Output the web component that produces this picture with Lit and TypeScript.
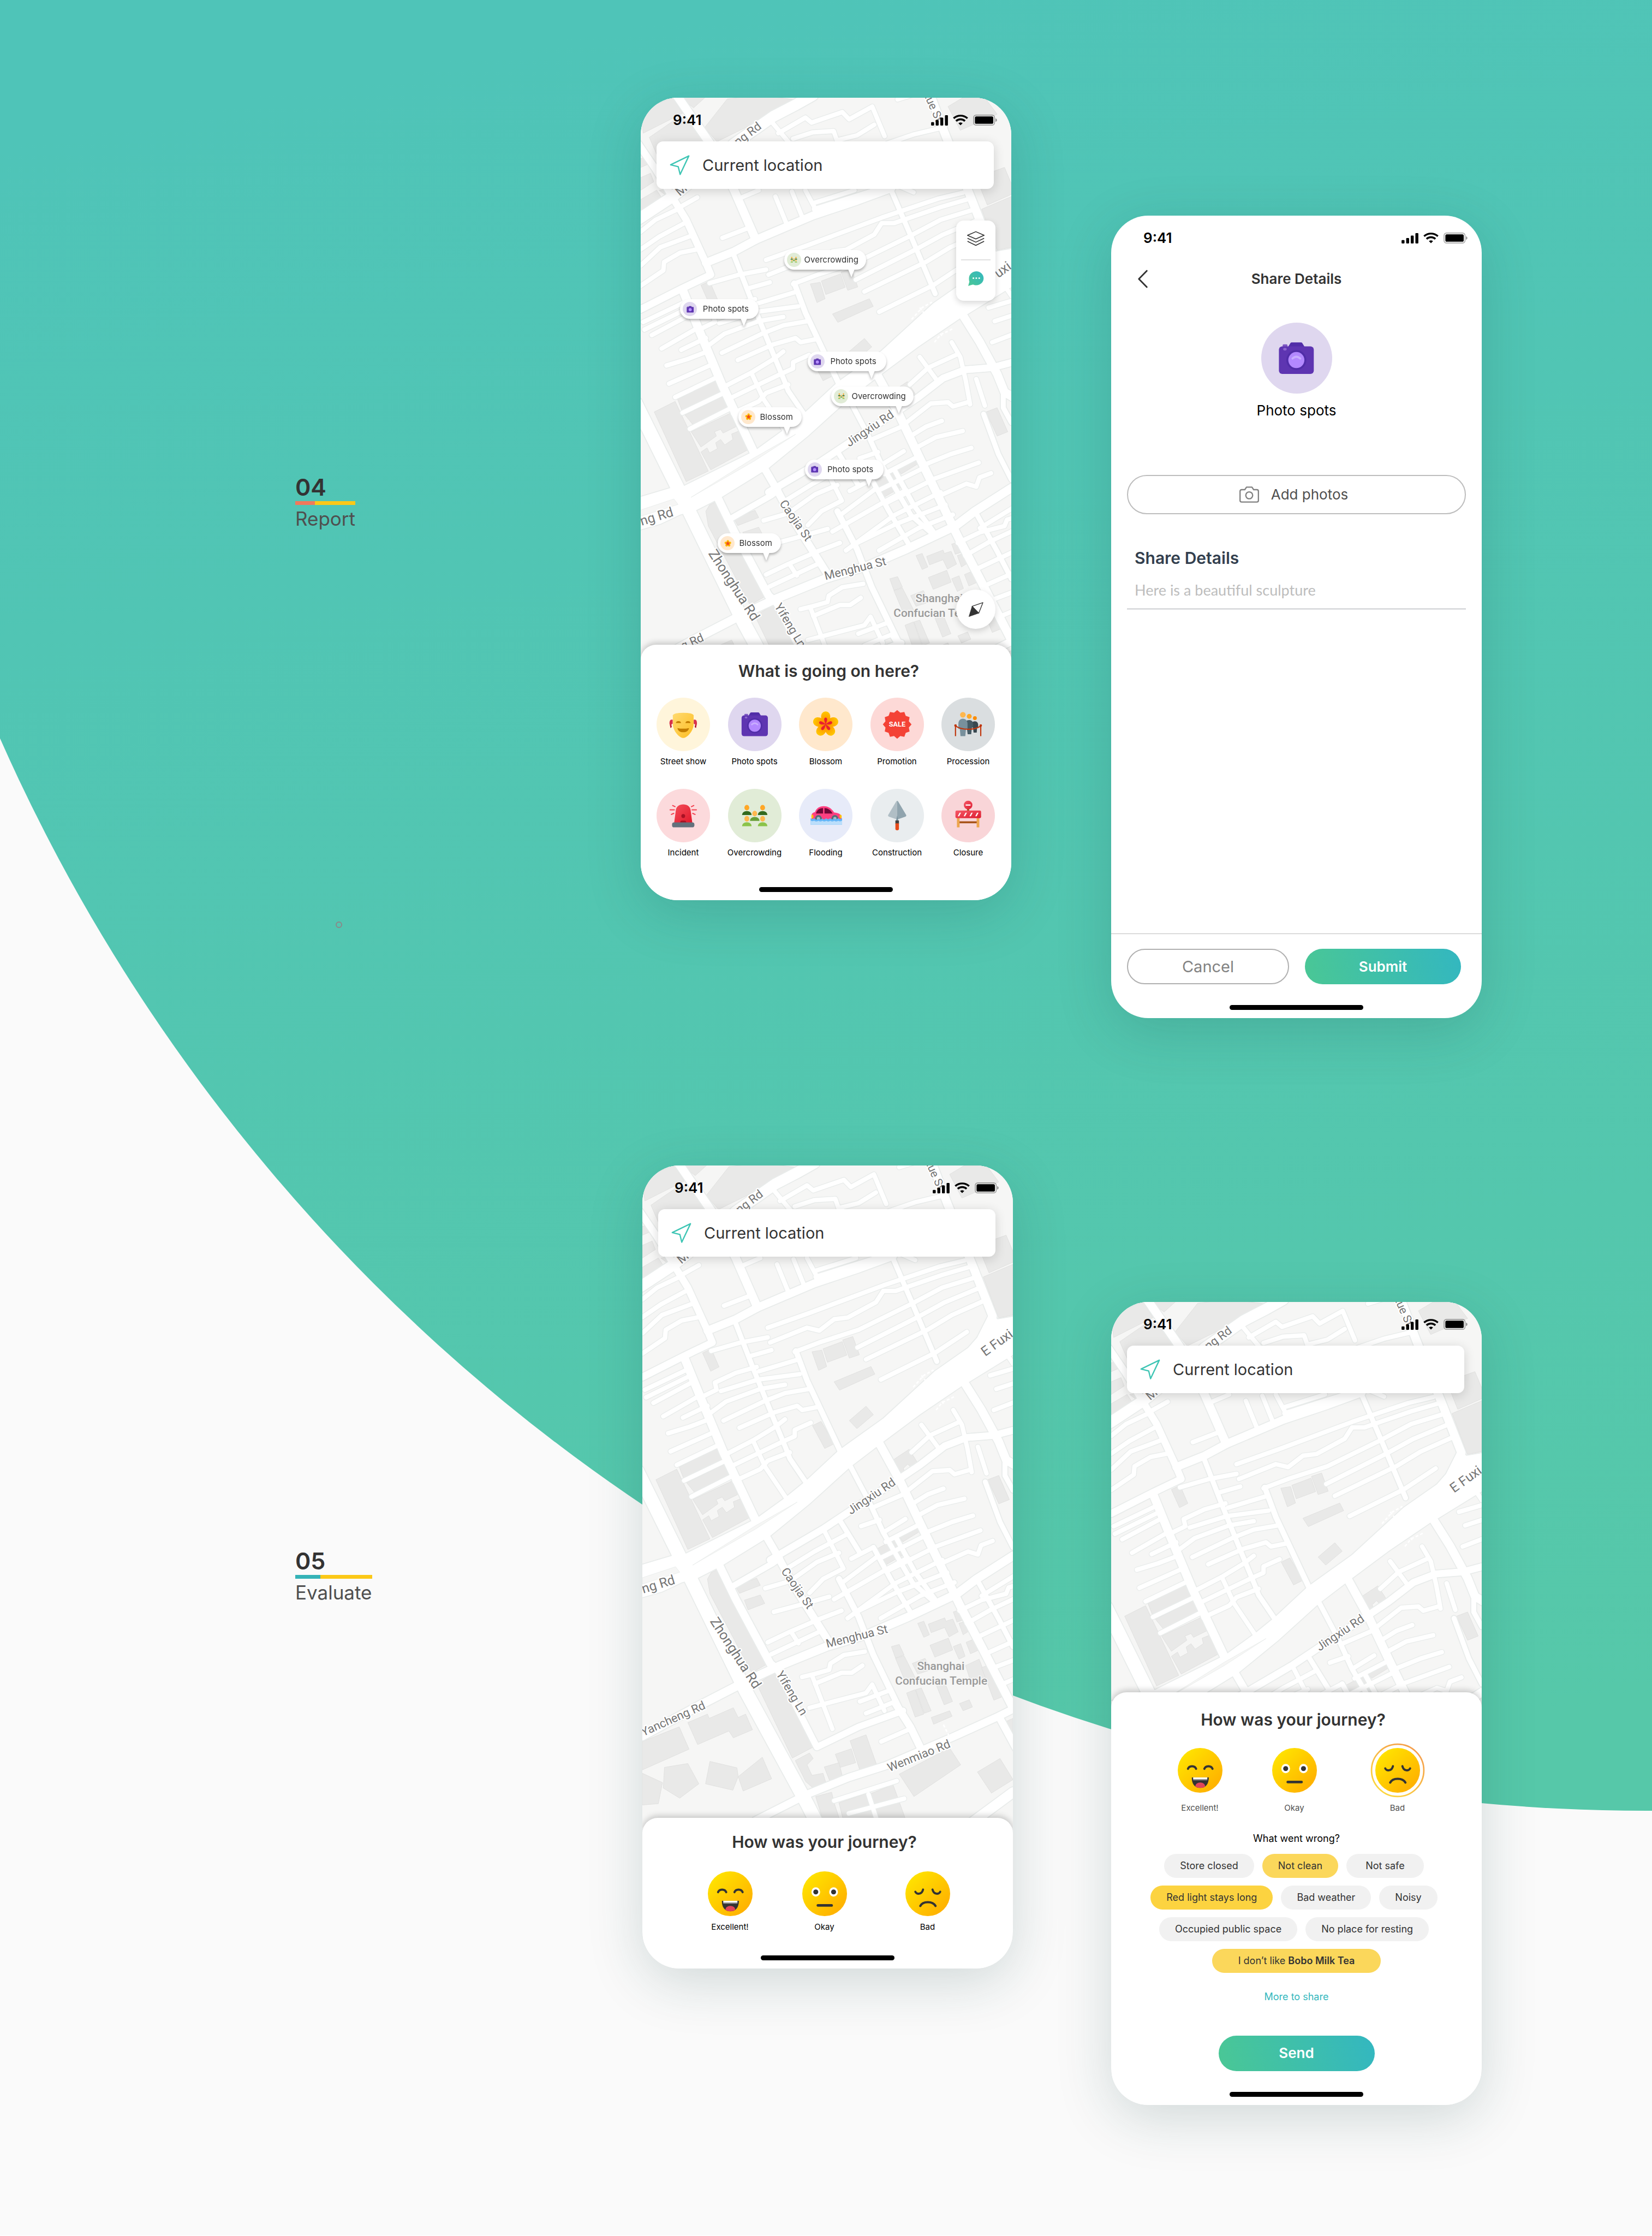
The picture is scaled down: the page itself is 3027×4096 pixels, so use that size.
import { LitElement, html, svg, css, nothing, type TemplateResult, type SVGTemplateResult } from "lit";
import { customElement, property } from "lit/decorators.js";
import { classMap } from "lit/directives/class-map.js";

/* ------------------------------------------------------------------ */
/* City map                                                            */
/* ------------------------------------------------------------------ */

// Street data is kept on a square tile grid and projected onto the 750-wide portrait map.
const project = (points: string): string =>
  points
    .trim()
    .split(/\s+/)
    .map((pair) => {
      const [x, y] = pair.split(",").map(Number);
      return `${((x - 20) * 0.4975).toFixed(1)},${((y - 21) * 0.8546).toFixed(1)}`;
    })
    .join(" ");

const BUILDINGS = [
  "75,765 160,740 295,905 205,930",
  "170,735 325,690 350,720 190,765",
  "200,772 355,728 376,756 235,797",
  "225,812 385,768 408,800 355,815 345,806 320,812 328,822 265,848",
  "265,860 290,850 300,862 332,852 325,838 345,830 362,843 395,830 390,817 420,810 455,855 305,902",
  "265,465 300,455 332,498 298,508",
  "710,462 750,458 770,497 737,506",
  "755,455 833,438 852,470 773,487",
  "835,434 876,426 903,469 862,477",
  "800,533 950,497 966,515 822,553",
  "862,625 930,591 960,611 893,644",
  "712,637 747,627 800,680 762,691",
  "1035,720 1105,693 1140,725 1115,738 1100,728 1082,738 1088,748 1065,755",
  "1407,285 1528,255 1528,375 1470,382",
  "1385,210 1500,186 1528,225 1528,250 1430,275",
  "1270,42 1330,21 1420,21 1470,60 1320,98",
  "970,930 1050,905 1090,940 1000,970",
  "1065,900 1140,875 1150,887 1080,912",
  "1425,765 1470,755 1513,812 1470,822",
  "285,1000 300,985 325,978 532,1200 465,1222 295,1035",
  "485,1248 560,1222 715,1398 630,1424",
  "400,1018 485,998 500,1015 415,1034",
  "435,1050 500,1038 518,1058 450,1073",
  "1140,1105 1165,1100 1188,1132 1165,1138",
  "1183,1107 1250,1092 1255,1100 1283,1095 1305,1125 1268,1137 1250,1115 1195,1127",
  "1285,1078 1318,1072 1335,1095 1300,1102",
  "1308,1105 1335,1100 1352,1122 1325,1132",
  "1190,1157 1265,1140 1283,1168 1210,1185",
  "1285,1160 1315,1153 1333,1183 1308,1190",
  "1337,1150 1370,1142 1390,1168 1355,1177",
  "1033,1160 1065,1155 1085,1180 1050,1187",
  "1050,1188 1085,1182 1140,1245 1095,1250",
  "1095,1270 1130,1262 1165,1320 1130,1327",
  "1132,1262 1155,1258 1195,1312 1167,1318",
  "1118,1200 1170,1188 1195,1215 1140,1225",
  "1215,1250 1250,1245 1282,1290 1248,1298",
  "1310,1295 1350,1286 1363,1303 1325,1312",
  "1195,1328 1270,1312 1280,1325 1205,1344",
  "1335,1205 1390,1190 1420,1235 1360,1250",
  "1400,1210 1435,1202 1488,1278 1450,1287",
  "805,1415 870,1402 888,1435 825,1446",
  "865,1383 930,1369 972,1438 905,1453",
  "760,1445 820,1435 835,1470 785,1482",
  "642,1430 700,1412 715,1425 690,1440 710,1465 755,1460 768,1485 715,1495 685,1480",
  "20,1385 170,1350 210,1403 20,1452",
  "205,1340 285,1320 292,1330 390,1305 410,1328 440,1320 468,1357 390,1376 372,1360 245,1392",
  "110,1446 205,1437 250,1485 172,1519 105,1495",
  "295,1432 405,1447 410,1468 388,1500 277,1485",
  "410,1468 508,1422 546,1473 430,1502",
  "20,1460 102,1482 85,1532 20,1535",
  "1065,1462 1270,1400 1315,1440 1125,1515",
  "1383,1457 1475,1425 1528,1475 1440,1507",
  "1490,1340 1528,1330 1528,1378",
  "725,1515 790,1505 800,1530 840,1600 770,1600",
  "820,1530 930,1508 980,1600 850,1600",
  "950,1508 1040,1487 1110,1600 990,1600",
  "20,50 150,21 190,58 30,105",
  "170,15 292,15 235,45",
  "280,92 372,24 500,15 640,25 540,65 330,125",
  "55,115 180,65 250,100 300,130 100,175",
  "20,165 40,163 52,178 20,186",
  "20,210 60,200 73,220 20,240",
  "20,262 85,240 110,262 20,295",
  "95,240 140,236 158,243 125,253",
];

const ROADS: Array<[number, string]> = [
  [22, "0,312 20,305 150,255 330,170 400,130 560,65 650,38 720,15"],
  [17, "160,10 300,128 400,240 488,357"],
  [14, "20,522 190,472 305,440 285,412 205,310 150,258"],
  [14, "10,130 80,190 150,258"],
  [16, "285,412 400,385 490,357 720,300 900,265 1040,235"],
  [17, "190,475 260,575 350,700 480,860"],
  [10, "395,388 470,500 550,615 605,692 620,715 690,775"],
  [11, "645,460 690,530 825,697"],
  [17, "1195,10 1260,110 1365,260 1445,378 1400,430"],
  [10, "1035,235 1120,350 1218,485"],
  [17, "985,680 1070,770 1150,868 1260,1000 1310,1060 1400,1160 1528,1305"],
  [10, "868,735 945,820 1000,890 1120,1010 1200,1050"],
  [10, "820,858 905,938"],
  [10, "1055,905 1130,985 1210,1048"],
  [10, "960,925 1030,1000 1115,1083"],
  [14, "540,955 760,880 850,845 1060,765 1150,730 1250,685 1340,665 1450,660 1528,648"],
  [15, "525,900 570,945 640,1020 775,1145"],
  [12, "385,1018 550,963 580,950"],
  [16, "335,970 400,1048 540,1200 570,1215"],
  [13, "570,1215 730,1398 900,1350 1080,1312"],
  [17, "20,1372 250,1300 450,1240 580,1205 770,1160 940,1130 1100,1090 1300,1035 1380,1000 1528,945"],
  [12, "820,1000 900,1090 960,1180 1060,1300"],
  [15, "1050,1295 1110,1350 1162,1412"],
  [15, "480,1572 690,1510 860,1470 1010,1442 1280,1375 1470,1325 1528,1308"],
  [17, "1335,540 1400,600 1470,675 1500,718 1540,732"],
  [10, "1495,725 1495,755 1528,790"],
  [10, "1415,770 1475,865 1528,925"],
  [10, "1380,1000 1470,1095 1528,1160"],
  [15, "1470,1325 1540,1400"],
  [20, "1330,1590 1528,1505"],
  [15, "665,1510 730,1590"],
  [27, "0,745 190,968 440,1265 690,1532 740,1590"],
];

const ALLEYS = [
  "250,257 180,280", "178,283 80,310 20,338", "198,318 95,350 20,380", "225,348 100,375 20,418",
  "250,380 180,388 115,410 112,430 20,466", "455,330 352,353", "568,255 615,322", "635,243 680,308",
  "690,240 740,295", "500,240 420,260", "548,75 620,125", "580,105 690,68 715,80 840,55 868,72 962,42 1012,112",
  "640,118 720,103 805,100 818,122 900,110 970,85", "1065,25 1120,15", "1020,130 1130,108 1245,92",
  "725,270 890,240", "725,285 1050,225 1130,245", "530,405 700,370 1000,305 1230,260 1330,246",
  "540,440 690,405 740,412 800,385 855,381 970,345 1000,318 1050,318 1240,280 1370,258",
  "640,462 740,440 900,410 1110,350 1240,310 1380,285", "895,452 1140,380 1250,345 1395,310",
  "930,480 1180,410 1280,375 1415,340", "990,528 1210,465 1340,415", "300,460 420,440 530,428",
  "460,472 545,458", "495,508 645,482", "265,568 322,552 315,535 400,512 485,498", "340,555 490,528 660,515",
  "290,610 360,580 500,550 600,540", "350,625 520,578 600,560 700,550", "415,642 560,605 650,590 670,600 740,592",
  "30,552 200,505", "35,570 210,520", "65,583 220,535", "105,615 240,570", "185,618 285,590",
  "125,655 210,640 300,620", "135,698 320,650", "160,730 340,680", "190,767 365,718", "220,805 390,755",
  "360,705 470,672 560,640 600,622", "375,735 500,700 590,675 640,662 640,647 705,630",
  "395,768 500,740 530,720 620,700", "470,672 520,735 605,808", "1115,700 1190,660 1310,628",
  "1155,635 1225,690", "1285,600 1320,635 1342,690 1360,747", "1385,687 1420,750", "1435,518 1540,500",
  "1460,550 1540,535", "1450,600 1540,580", "1505,470 1528,490", "960,830 1080,800",
  "1090,795 1200,745 1270,742 1290,752 1350,742", "1110,825 1180,800 1245,786", "1140,850 1220,825 1330,810",
  "1165,892 1280,865 1365,850", "1195,927 1300,905 1395,885", "1230,965 1345,935 1385,942 1398,920 1445,910",
  "910,875 985,860", "1000,890 1090,858", "1010,912 1150,870", "870,952 960,925", "990,950 1180,895",
  "1020,980 1210,925", "600,978 720,935 850,895", "520,1022 620,1005 730,960 820,938", "700,1033 755,1000 838,975 755,880",
  "555,1078 670,1060 780,1042", "830,1010 980,945", "800,1048 1020,975 1100,950", "855,1093 1050,1010 1240,955",
  "890,1078 1060,1030 1260,985", "990,1093 1150,1040 1290,1008", "530,1150 620,1125 740,1095 830,1075",
  "545,1178 740,1125", "625,1125 655,1152", "670,1232 720,1225 780,1215 785,1200 840,1180 925,1172",
  "722,1248 830,1222 872,1222 915,1205", "710,1228 793,1355", "700,1305 930,1270 955,1250 1005,1312",
  "905,1290 1020,1265", "930,1318 1050,1290", "992,1385 1110,1355",
  "1310,1075 1400,1050 1500,1035 1510,1020 1540,1015", "1340,1105 1440,1072 1540,1045", "1375,1140 1540,1095",
  "1425,1175 1540,1145", "1440,1212 1540,1190", "1480,1250 1540,1235", "1400,1040 1540,990",
  "800,1525 1055,1478", "860,1555 1085,1520", "940,1510 990,1600",
];

const TRAILS = ["1122,546 1165,518 1205,505", "1155,518 1178,535", "1215,600 1240,582 1290,568", "1228,570 1245,585", "1245,1345 1268,1372"];

const AVENUE =
  "20,966 148,944 190,942 484,857 600,808 685,768 820,695 1000,620 1210,508 1345,453 1425,400 1445,375 1465,385 1540,378 " +
  "1540,465 1350,533 1320,543 1150,610 1000,675 865,735 700,822 540,898 345,968 245,998 180,1008 100,1030 10,1045";
const MEDIANS = ["20,997 155,971 172,984 20,1012", "225,967 480,882 650,818 480,874"];

interface MapLabel { text: string; x: number; y: number; turn: number; size: number }
const LABELS: MapLabel[] = [
  { text: "Mi", x: 79, y: 200, turn: -40, size: 25 },
  { text: "ng Rd", x: 197, y: 98, turn: -37, size: 24 },
  { text: "Xue St", x: 571, y: -10, turn: 66, size: 23 },
  { text: "E Fuxi", x: 694, y: 387, turn: -36, size: 27 },
  { text: "Jingxiu Rd", x: 422, y: 707, turn: -34, size: 24 },
  { text: "ng Rd", x: 2, y: 866, turn: -17, size: 27 },
  { text: "Caojia St", x: 280, y: 821, turn: 55, size: 24 },
  { text: "Menghua St", x: 374, y: 976, turn: -14, size: 24 },
  { text: "Zhonghua Rd", x: 136, y: 922, turn: 57, size: 28 },
  { text: "Yifeng Ln", x: 270, y: 1029, turn: 59, size: 24 },
  { text: "Yancheng Rd", x: 2, y: 1155, turn: -24, size: 24 },
  { text: "Wenmiao Rd", x: 500, y: 1227, turn: -22, size: 24 },
];
const PLACES = [
  { text: "Shanghai", x: 604, y: 1021 },
  { text: "Confucian Temple", x: 605, y: 1050 },
];

@customElement("city-map")
export class CityMap extends LitElement {
  /** Lowest map unit that stays uncovered; labels anchored below it are skipped. */
  @property({ type: Number }) depth = 1340;

  static styles = css`
    :host { display: block; }
    .map { display: block; width: 100%; height: auto; background: #f6f6f5; }
    .building { fill: #e9e9e8; stroke: #dfdfde; stroke-width: 1; }
    .casing { fill: none; stroke: #e9eceb; stroke-linejoin: round; stroke-linecap: round; }
    .road { fill: none; stroke: #ffffff; stroke-linejoin: round; stroke-linecap: round; }
    .avenue { fill: #ffffff; }
    .avenue-edge { fill: none; stroke: #e9eceb; stroke-width: 4; }
    .median { fill: #f6f6f5; stroke: #e9eceb; stroke-width: 1; }
    .trail { fill: none; stroke: #ffffff; stroke-width: 3; stroke-dasharray: 6 4; }
    .label { fill: #757575; stroke: #ffffff; stroke-width: 5; stroke-linejoin: round; paint-order: stroke; font-family: Roboto, "Liberation Sans", sans-serif; }
    .place { fill: #999999; stroke: #f6f6f5; stroke-width: 4; stroke-linejoin: round; paint-order: stroke; text-anchor: middle; font: 500 23px Roboto, "Liberation Sans", sans-serif; }
  `;

  render() {
    return html`
      <svg class="map" viewBox="0 0 750 1340" role="img" aria-label="Street map">
        ${BUILDINGS.map((b) => svg`<polygon class="building" points=${project(b)} />`)}
        ${ALLEYS.map((a) => svg`<polyline class="casing" stroke-width="12" points=${project(a)} />`)}
        ${ROADS.map(([w, r]) => svg`<polyline class="casing" stroke-width=${w + 4} points=${project(r)} />`)}
        <polygon class="avenue-edge" points=${project(AVENUE)} />
        ${ALLEYS.map((a) => svg`<polyline class="road" stroke-width="9" points=${project(a)} />`)}
        ${ROADS.map(([w, r]) => svg`<polyline class="road" stroke-width=${w} points=${project(r)} />`)}
        <polygon class="avenue" points=${project(AVENUE)} />
        ${MEDIANS.map((m) => svg`<polygon class="median" points=${project(m)} />`)}
        ${TRAILS.map((t) => svg`<polyline class="trail" points=${project(t)} />`)}
        ${LABELS.filter((l) => l.y < this.depth).map(
          (l) => svg`<text class="label" font-size=${l.size} transform="translate(${l.x} ${l.y}) rotate(${l.turn})">${l.text}</text>`
        )}
        ${PLACES.filter((p) => p.y < this.depth).map((p) => svg`<text class="place" x=${p.x} y=${p.y}>${p.text}</text>`)}
      </svg>
    `;
  }
}

/* ------------------------------------------------------------------ */
/* Topic icons                                                         */
/* ------------------------------------------------------------------ */

type Topic =
  | "show" | "photo" | "blossom" | "promotion" | "procession"
  | "incident" | "crowd" | "flood" | "construction" | "closure";

const burst = Array.from({ length: 24 }, (_, i) => {
  const r = i % 2 ? 18.4 : 21.8;
  const a = (i * Math.PI) / 12;
  return `${(24 + r * Math.sin(a)).toFixed(2)},${(24 - r * Math.cos(a)).toFixed(2)}`;
}).join(" ");

const person = (x: number, y: number, head: string, body: string) => svg`
  <ellipse cx=${x} cy=${y} rx="3.7" ry="4.2" fill=${head} />
  <path fill=${body} d="M${x - 7.2} ${y + 11.2}c0-3.6 3-6 7.2-6s7.2 2.4 7.2 6z" />`;

const TOPIC_ART: Record<Topic, SVGTemplateResult> = {
  show: svg`
    <defs><linearGradient id="mask" x1="0" y1="0" x2="1" y2="1"><stop offset="0" stop-color="#ffda70"/><stop offset="1" stop-color="#fdbd22"/></linearGradient></defs>
    <path d="M8 17c-4-1-5 2-4.900 6l1.500 6.500 1.900-1.500-.5-4 2-1z" fill="#d8314c"/><path d="M4.500 24l.2 5.500 1.800-1.500z" fill="#a5122b"/>
    <path d="M40 17c4-1 5 2 4.900 6l-1.500 6.500-1.900-1.500.5-4-2-1z" fill="#d8314c"/><path d="M43.500 24l-.2 5.500-1.800-1.500z" fill="#a5122b"/>
    <path d="M8.200 10.200Q10 6.500 24 6.500T39.800 10.200V24c0 9-9.500 20.700-15.800 20.700S8.200 33 8.200 24z" fill="url(#mask)"/>
    <path d="M12.800 22a4 3.400 0 0 1 7.900 0zM27.300 22a4 3.400 0 0 1 7.900 0z" fill="#c27c00"/>
    <path d="M15.200 29.600q8.800 2 17.600 0c-.6 4-4 6.400-8.800 6.400s-8.200-2.400-8.800-6.400z" fill="#c27c00"/>`,
  photo: svg`
    <rect x="8.300" y="8" width="5.500" height="5" rx="1" fill="#7e57c2"/>
    <path d="M14.500 11l2.600-4.300q.6-.9 1.600-.9h10.600q1 0 1.600.9l2.600 4.300z" fill="#512da8"/>
    <rect x="4" y="10.300" width="40" height="31.700" rx="3.800" fill="#5e35b1"/>
    <ellipse cx="10.900" cy="13.600" rx="2" ry="1.500" fill="#8e66cf"/>
    <circle cx="24" cy="26" r="11.500" fill="#512da8"/><circle cx="24" cy="26" r="9.200" fill="#b388ff"/>
    <path d="M19.600 24.200q4.400-4 8.800 0" fill="none" stroke="#c9adff" stroke-width="2.400" stroke-linecap="round"/>`,
  blossom: svg`
    <defs><radialGradient id="petal" gradientUnits="userSpaceOnUse" cx="24" cy="24" r="20"><stop offset=".2" stop-color="#ff8f00"/><stop offset="1" stop-color="#ffca00"/></radialGradient></defs>
    ${[0, 72, 144, 216, 288].map((a) => svg`<path transform="rotate(${a} 24 24)" fill="url(#petal)" d="M24 26c-3.500-3-7-8-7-13.500C17 7.500 20 4.300 24 4.300s7 3.200 7 8.200C31 18 27.500 23 24 26z"/>`)}
    ${[0, 72, 144, 216, 288].map((a) => svg`<path transform="rotate(${a} 24 24)" fill="#e8212f" d="M24 24.500c-1-3-2.300-5.500-2.300-8 0-1.700 1-2.900 2.300-2.900s2.300 1.200 2.300 2.900c0 2.500-1.300 5-2.300 8z"/>`)}`,
  promotion: svg`
    <polygon points=${burst} fill="#f44336"/>
    <text x="24" y="27.800" text-anchor="middle" font-family="Roboto, sans-serif" font-weight="700" font-size="10.500" fill="#fff">SALE</text>`,
  procession: svg`
    <circle cx="34.300" cy="14.500" r="2.900" fill="#fb8c00"/><path d="M29 25c0-3.500 2-5.800 5.300-5.800s5 2.400 5 5.800v3.500h-1.600l-.6 8h-4.800l-1-8z" fill="#37474f"/>
    <circle cx="25.700" cy="11.800" r="3.700" fill="#ffa726"/><path d="M19 24c0-4 2.700-6.600 6.700-6.600s6 2.600 6 6.600v5h-2l-1 10h-5.400L22 29z" fill="#455a64"/>
    <circle cx="16" cy="9.400" r="4.300" fill="#ffb74d"/><path d="M9.200 23c0-4.500 2.800-7.700 6.900-7.700s7 3.200 7 7.700v8h-2.300L19.700 42h-7.300l-1-11H9.200z" fill="#78909c"/>
    <path d="M4.800 26.500V42M43.200 26.500V42" stroke="#bf360c" stroke-width="1.800"/>
    <path d="M4.800 26.500Q12 31.500 24 31.500T43.200 26.500" fill="none" stroke="#bf360c" stroke-width="1.900"/>
    <circle cx="4.800" cy="25.800" r="1.900" fill="#bf360c"/><circle cx="43.200" cy="25.800" r="1.900" fill="#bf360c"/>`,
  incident: svg`
    <defs><linearGradient id="siren" x1="0" y1="0" x2="1" y2="1"><stop offset="0" stop-color="#f44f5a"/><stop offset="1" stop-color="#e2182b"/></linearGradient></defs>
    <path d="M10.200 35l2.600-19.500C13.500 10.200 18 7 24 7s10.500 3.200 11.200 8.500L37.800 35z" fill="url(#siren)"/>
    <ellipse cx="24" cy="24.800" rx="2.900" ry="3" fill="#a81224"/><path d="M19.500 35v-.8q0-2.500 2.500-2.500h4q2.500 0 2.500 2.500v.8z" fill="#a81224"/>
    <rect x="7" y="34.400" width="34" height="7.600" rx="3" fill="#64717c"/>
    <path d="M4 15.300h6.500M37.500 15.300H44M8 8.800l3.500 1.700M40 8.800l-3.500 1.700M6 22.300l3.500-1.500M42 22.300l-3.500-1.500" stroke="#f4404f" stroke-width="1.700" stroke-linecap="round"/>`,
  crowd: svg`
    ${person(12, 12, "#ffa726", "#33691e")}${person(36, 12, "#ffa726", "#33691e")}
    ${person(24, 21, "#ffb74d", "#689f38")}
    ${person(12, 29, "#ffb74d", "#8bc34a")}${person(36, 29, "#ffb74d", "#8bc34a")}`,
  flood: svg`
    <path d="M2.500 31v-7c0-3 2-4.500 5.200-5.200C9.800 13 14.500 9.700 21 9.700c7 0 12 3.500 15.800 9.600 7 .8 11.200 3 11.200 7.200V31z" fill="#ff4081"/>
    <path d="M9.300 21c1-5.300 5-8.200 10.700-8.400V21zM22.200 21v-8.400C28 12.800 32 16 34.500 21z" fill="#720738"/>
    <circle cx="13" cy="28.500" r="5.200" fill="#546e7a"/><circle cx="13" cy="28.500" r="2.400" fill="#b0bec5"/>
    <circle cx="38" cy="28.500" r="5.200" fill="#546e7a"/><circle cx="38" cy="28.500" r="2.400" fill="#b0bec5"/>
    <ellipse cx="3.800" cy="25.500" rx="1.600" ry="2.900" fill="#ffc107"/><ellipse cx="46.700" cy="25.500" rx="1.600" ry="2.700" fill="#ffc107"/>
    <path d="M1 28q2.800 2.500 5.200 0l1 .8q2.500 3 5.800 0 3.500 2.500 5.800-.4 2.900 3.400 5.800-.4 3 3.400 6.200 0 3 3.400 6.200.4 3 2.800 6.200-.4 2.800 3 5.800 0V38H1z" fill="#64b5f6"/>
    <path d="M1 31.500q3 2 5.500.2 3 2.500 6.500.2 3 2.400 6 0 3 2.400 6 0 3 2.400 6 0 3 2.400 6 0 3 2.400 6 0 3 2 6-.4V38H1z" fill="#bbdefb"/>`,
  construction: svg`
    <path d="M24 1.600c-1 0-1.500.8-2 2L10.300 23.300c-.6 1.300.3 2 1.200 2.500L24 30.200z" fill="#b0bec5"/>
    <path d="M24 1.600c1 0 1.500.8 2 2l11.700 19.700c.6 1.300-.3 2-1.200 2.500L24 30.200z" fill="#90a4ae"/>
    <path d="M24 24l1.600 8h-3.200z" fill="#78909c"/><rect x="21.300" y="31.500" width="5.400" height="5" fill="#424242"/>
    <path d="M21.300 36h5.400v8.200q0 2.300-2.700 2.300t-2.700-2.300z" fill="#e64a19"/>`,
  closure: svg`
    <defs><linearGradient id="sign" x1="0" y1="0" x2="1" y2="1"><stop offset="0" stop-color="#f65866"/><stop offset="1" stop-color="#dc1c30"/></linearGradient></defs>
    <rect x="22.300" y="13" width="3.400" height="5" fill="#a8541b"/><circle cx="24" cy="8" r="6.500" fill="url(#sign)"/><rect x="20.300" y="7.100" width="7.400" height="1.900" fill="#fff"/>
    <rect x="9" y="32.800" width="30" height="3" fill="#a8541b"/>
    <rect x="7" y="27" width="4" height="15" fill="#eda54d"/><rect x="37" y="27" width="4" height="15" fill="#eda54d"/>
    <rect x="4.700" y="16.500" width="39" height="11.500" rx="2" fill="url(#sign)"/>
    <path d="M11 19.700h2.200l-2.800 5.400H8.200zM20 19.700h2.200l-2.800 5.400h-2.200zM28.800 19.700H31l-2.800 5.400H26zM37.600 19.700h2.200L37 25.100h-2.200z" fill="#fff"/>`,
};

@customElement("topic-icon")
export class TopicIcon extends LitElement {
  @property() topic: Topic = "photo";

  static styles = css`
    :host { display: block; aspect-ratio: 1; }
    .disc { width: 100%; height: 100%; border-radius: 50%; display: flex; align-items: center; justify-content: center; }
    .art { width: 59%; height: 59%; overflow: visible; }
    .show { background: #fff5db; }
    .photo { background: #dfd7ef; }
    .blossom { background: #ffe8cd; }
    .promotion { background: #fdd9d7; }
    .procession { background: #dadee0; }
    .incident { background: #fcdadc; }
    .crowd { background: #e1ecd7; }
    .flood { background: #e7ebf9; }
    .construction { background: #e9edef; }
    .closure { background: #f9d5d8; }
  `;

  render() {
    return html`<div class="disc ${this.topic}">
      <svg class="art" viewBox="0 0 48 48" aria-hidden="true">${TOPIC_ART[this.topic]}</svg>
    </div>`;
  }
}

/* ------------------------------------------------------------------ */
/* Mood faces                                                          */
/* ------------------------------------------------------------------ */

type Mood = "excellent" | "okay" | "bad";

const MOOD_ART: Record<Mood, SVGTemplateResult> = {
  excellent: svg`
    <defs><clipPath id="mouth"><path d="M28 59h34.500c0 13-6 21.500-17.200 21.500S28 72 28 59z"/></clipPath></defs>
    <path d="M20.500 42c2.500-7 14-7 16.500 0M53.500 42c2.500-7 14-7 16.500 0" fill="none" stroke="#333" stroke-width="4.200" stroke-linecap="round"/>
    <g clip-path="url(#mouth)"><rect x="26" y="58" width="40" height="24" fill="#333"/><rect x="31" y="58" width="28.500" height="5" fill="#fff"/><rect x="31" y="63" width="28.500" height="2" fill="#999"/><ellipse cx="45.200" cy="77" rx="10" ry="7.500" fill="#e0455a"/></g>`,
  okay: svg`
    <ellipse cx="27.200" cy="41.500" rx="8.800" ry="9.300" fill="#fff"/><ellipse cx="63" cy="41.500" rx="8.800" ry="9.300" fill="#fff"/>
    <circle cx="27.200" cy="41.500" r="5" fill="#333"/><circle cx="63" cy="41.500" r="5" fill="#333"/>
    <path d="M31.500 68.500H59" stroke="#333" stroke-width="5.400" stroke-linecap="round"/>`,
  bad: svg`
    <path d="M20 41c2 5.500 13 6.500 15.500-4.500M70 41c-2 5.500-13 6.500-15.500-4.500" fill="none" stroke="#333" stroke-width="4.200" stroke-linecap="round"/>
    <path d="M30 69.500c5-10 25-10 30.500 0" fill="none" stroke="#333" stroke-width="4.600" stroke-linecap="round"/>`,
};

@customElement("mood-face")
export class MoodFace extends LitElement {
  @property() mood: Mood = "okay";
  @property({ type: Boolean }) selected = false;

  static styles = css`
    :host { display: block; aspect-ratio: 1; }
    .face { display: block; width: 100%; height: 100%; overflow: visible; }
  `;

  render() {
    return html`<svg class="face" viewBox="0 0 90 90" aria-hidden="true">
      <defs>
        <linearGradient id="skin" x1="0.150" y1="0.150" x2="0.850" y2="0.850"><stop offset="0" stop-color="#ffe100" /><stop offset="1" stop-color="#ffb200" /></linearGradient>
        <linearGradient id="ring" x1="0.800" y1="0.100" x2="0.200" y2="0.900"><stop offset="0" stop-color="#f5a04c" /><stop offset="1" stop-color="#fcd53f" /></linearGradient>
      </defs>
      ${this.selected ? svg`<circle cx="45" cy="45" r="52.600" fill="none" stroke="url(#ring)" stroke-width="3" />` : nothing}
      <circle cx="45" cy="45" r="45" fill="url(#skin)" />
      ${MOOD_ART[this.mood]}
    </svg>`;
  }
}

/* ------------------------------------------------------------------ */
/* Page                                                                */
/* ------------------------------------------------------------------ */

const TOPICS: Array<{ topic: Topic; label: string }> = [
  { topic: "show", label: "Street show" },
  { topic: "photo", label: "Photo spots" },
  { topic: "blossom", label: "Blossom" },
  { topic: "promotion", label: "Promotion" },
  { topic: "procession", label: "Procession" },
  { topic: "incident", label: "Incident" },
  { topic: "crowd", label: "Overcrowding" },
  { topic: "flood", label: "Flooding" },
  { topic: "construction", label: "Construction" },
  { topic: "closure", label: "Closure" },
];

// Pin positions are in map units (750 × 1624 for a full screen).
const PINS: Array<{ topic: Topic; label: string; x: number; y: number }> = [
  { topic: "crowd", label: "Overcrowding", x: 290, y: 308 },
  { topic: "photo", label: "Photo spots", x: 80, y: 408 },
  { topic: "photo", label: "Photo spots", x: 338, y: 514 },
  { topic: "crowd", label: "Overcrowding", x: 386, y: 584 },
  { topic: "blossom", label: "Blossom", x: 198, y: 626 },
  { topic: "photo", label: "Photo spots", x: 332, y: 732 },
  { topic: "blossom", label: "Blossom", x: 156, y: 882 },
];

const MOODS: Array<{ mood: Mood; label: string }> = [
  { mood: "excellent", label: "Excellent!" },
  { mood: "okay", label: "Okay" },
  { mood: "bad", label: "Bad" },
];

interface Chip { label: string; strong?: string; tone?: "picked" | "vivid"; size?: "roomy" | "wide" }
const CHIP_ROWS: Chip[][] = [
  [{ label: "Store closed" }, { label: "Not clean", tone: "picked" }, { label: "Not safe", size: "roomy" }],
  [{ label: "Red light stays long", tone: "vivid" }, { label: "Bad weather" }, { label: "Noisy" }],
  [{ label: "Occupied public space" }, { label: "No place for resting" }],
  [{ label: "I don’t like ", strong: "Bobo Milk Tea", tone: "picked", size: "wide" }],
];

@customElement("app-root")
export class AppRoot extends LitElement {
  static styles = css`
    :host { display: block; font-family: Inter, "Liberation Sans", sans-serif; color: #333333; }
    * { box-sizing: border-box; }
    h1, h2, p { margin: 0; }
    button, input { font: inherit; color: inherit; }
    button { border: 0; background: none; padding: 0; cursor: pointer; }

    .page { position: relative; overflow: hidden; background: #fafafa; padding: 179px 0 239px; display: flex; flex-direction: column; gap: 270px; }
    .backdrop { position: absolute; inset: 0; width: 100%; height: 100%; }
    .stage { position: relative; display: grid; align-items: start; grid-template-columns: 541fr 633fr 679fr 183fr 679fr 312fr; }
    .stage.evaluate { grid-template-columns: 541fr 636fr 679fr 180fr 679fr 312fr; }
    .caption { grid-column: 2; display: flex; flex-direction: column; align-items: flex-start; padding-top: 688px; }
    .evaluate .caption { padding-top: 699px; }
    .first { grid-column: 3; }
    .second { grid-column: 5; margin-top: 216px; }
    .evaluate .second { margin-top: 250px; }

    .heading { display: flex; flex-direction: column; }
    .number { font-size: 43px; line-height: 50px; font-weight: 600; color: #333333; }
    .rule { height: 7px; margin-top: 1px; background: #fbc817; }
    .rule-part { display: block; height: 100%; width: 33%; background: #f0795b; }
    .evaluate .rule-part { background: #35b3b7; }
    .name { font-size: 35px; line-height: 44px; font-weight: 400; color: #4f4f4f; padding-top: 3px; }
    .dot { width: 12px; height: 12px; border: 2px solid #8b8888; border-radius: 50%; margin: 716px 0 0 74px; }

    .phone { position: relative; display: flex; flex-direction: column; aspect-ratio: 750 / 1624; border-radius: 68px; overflow: hidden; background: #ffffff; box-shadow: 0 24px 100px rgba(24, 66, 66, 0.18); }
    .backing { position: absolute; inset: 0 0 auto 0; }
    .over { position: relative; flex: 1; display: flex; flex-direction: column; }

    .status { position: relative; display: flex; align-items: center; gap: 9px; padding: 27px 26px 0 59px; height: 55px; color: #000000; }
    .time { flex: 1; font-size: 26px; line-height: 28px; font-weight: 600; }
    .signal { width: 31px; height: 19px; }
    .wifi { width: 28px; height: 20px; }
    .battery { width: 44px; height: 20px; }

    .search { display: flex; align-items: center; gap: 23px; height: 87px; margin: 25px 32px 0 29px; padding: 0 24px; border-radius: 12px; background: #ffffff; box-shadow: 0 4px 20px rgba(0, 0, 0, 0.16); }
    .search-icon { width: 37px; height: 37px; flex: none; }
    .search-field { flex: 1; min-width: 0; border: 0; outline: 0; padding: 0; background: none; font-size: 29px; line-height: 36px; color: #333333; }
    .tools { align-self: flex-end; display: flex; flex-direction: column; align-items: center; width: 72px; margin: 58px 29px 0 0; border-radius: 14px; background: #ffffff; box-shadow: 0 4px 12px rgba(0, 0, 0, 0.16); }
    .tool { display: flex; align-items: center; justify-content: center; width: 72px; height: 71px; padding-bottom: 8px; }
    .tool + .tool-line + .tool { height: 74px; }
    .tool-line { width: 54px; height: 2px; background: #e0e0e0; }
    .tool-icon { width: 34px; height: 34px; }
    .compass { align-self: flex-end; display: flex; align-items: center; justify-content: center; width: 72px; height: 72px; margin: auto 29px 29px 0; border-radius: 50%; background: #ffffff; box-shadow: 0 4px 12px rgba(0, 0, 0, 0.16); }

    .pins { position: absolute; inset: 0; }
    .pin { position: absolute; display: flex; align-items: center; gap: 6px; height: 36px; padding: 0 14px 0 5px; border-radius: 18px; background: #ffffff; filter: drop-shadow(0 3px 2px rgba(0, 0, 0, 0.28)); font-size: 15px; line-height: 20px; color: #333333; }
    .pin::after { content: ""; position: absolute; right: 21px; top: 35px; border: 6px solid transparent; border-top: 15px solid #ffffff; border-bottom: 0; }
    .pin.photo { min-width: 144px; }
    .pin.blossom { min-width: 116px; }
    .pin-icon { width: 26px; flex: none; }
    .pin-text { flex: 1; text-align: center; white-space: nowrap; }

    .sheet { position: relative; display: flex; flex-direction: column; align-items: stretch; padding-bottom: 15px; border-radius: 28px 28px 0 0; background: #ffffff; box-shadow: 0 -3px 12px rgba(0, 0, 0, 0.22); }
    .title { text-align: center; font-size: 30px; line-height: 36px; font-weight: 600; color: #333333; }
    .sheet.topics { padding-top: 30px; }
    .sheet.quick { padding-top: 26px; }
    .sheet.full { padding-top: 32px; }
    .topics .title { padding-left: 10px; }
    .quick .title, .full .title { padding-right: 12px; }
    .home { align-self: center; width: 245px; height: 9px; border-radius: 5px; background: #000000; }

    .topic-grid { display: grid; grid-template-columns: repeat(5, 98px); justify-content: space-between; row-gap: 40px; margin: 31px 30px 53px 29px; }
    .topic { display: flex; flex-direction: column; align-items: center; gap: 9px; font-size: 15px; line-height: 20px; color: #000000; white-space: nowrap; }
    .topic-disc { width: 98px; }

    .moods { display: flex; justify-content: center; gap: 91px; margin-top: 36px; padding-left: 4px; }
    .mood { display: flex; flex-direction: column; align-items: center; gap: 10px; width: 82px; font-size: 15px; line-height: 20px; color: #000000; }
    .mood:last-child { margin-left: 16px; }
    .mood-art { width: 82px; }
    .quick .home { margin-top: 42px; }
    .full .moods { margin-top: 34px; padding-left: 8px; }
    .full .mood { gap: 18px; color: #4f4f4f; }
    .question { margin-top: 34px; text-align: center; font-size: 18px; line-height: 24px; color: #000000; }
    .chips { display: flex; flex-direction: column; gap: 14px; margin-top: 16px; }
    .chip-row { display: flex; justify-content: center; gap: 15px; padding-right: 9px; }
    .chip-row:last-child { padding-right: 0; }
    .chip { height: 44px; padding: 0 29px; border-radius: 22px; background: #f1f1f1; font-size: 18px; line-height: 24px; color: #333333; white-space: nowrap; }
    .chip.roomy { padding: 0 35px; }
    .chip.wide { padding: 0 48px; }
    .chip.picked { background: #fbd75b; }
    .chip.vivid { background: #fcd340; }
    .chip-strong { font-weight: 600; }
    .more { align-self: center; margin-top: 32px; font-size: 18px; line-height: 24px; color: #35b8bd; text-decoration: none; }
    .primary { height: 65px; border-radius: 33px; background: linear-gradient(75deg, #4ac795, #33b7c0); color: #ffffff; font-size: 26px; line-height: 32px; font-weight: 600; }
    .full .primary { align-self: center; width: 286px; margin-top: 59px; }
    .full .home, .actions + .home { margin-top: 38px; }

    .bar { display: flex; align-items: center; margin: 39px 0 0; padding: 0 49px; height: 44px; }
    .back { width: 18px; height: 34px; }
    .back-icon { display: block; width: 18px; height: 34px; }
    .bar-title { flex: 1; text-align: center; margin-right: 18px; font-size: 26px; line-height: 32px; font-weight: 600; }
    .hero { display: flex; flex-direction: column; align-items: center; gap: 13px; margin-top: 58px; font-size: 26px; line-height: 36px; color: #000000; }
    .hero-icon { width: 130px; }
    .add { display: flex; align-items: center; justify-content: center; gap: 22px; height: 72px; margin: 100px 29px 0; padding-right: 10px; border: 2px solid #bdbdbd; border-radius: 36px; font-size: 26px; line-height: 32px; color: #4f4f4f; }
    .add-icon { width: 36px; height: 30px; }
    .field-label { margin: 62px 43px 0; font-size: 30px; line-height: 36px; font-weight: 600; color: #333f4e; }
    .field { height: 63px; margin: 13px 29px 0; padding: 0 14px 8px; border: 0; border-bottom: 1px solid #9ea2a8; outline: 0; font-family: Lato, sans-serif; font-size: 27px; line-height: 32px; background: none; border-radius: 0; }
    .field::placeholder { color: #bdbdbd; opacity: 1; }
    .foot { display: flex; flex-direction: column; margin-top: auto; padding: 27px 0 15px; border-top: 1px solid #bdbdbd; }
    .actions { display: grid; grid-template-columns: 297fr 286fr; gap: 29px; padding: 0 38px 0 29px; }
    .cancel { height: 65px; border: 2px solid #b0b0b0; border-radius: 33px; font-size: 29px; line-height: 32px; color: #828282; }
  `;

  private status(): TemplateResult {
    return html`<div class="status">
      <span class="time">9:41</span>
      <svg class="signal" viewBox="0 0 34 21" aria-hidden="true">
        <rect x="0" y="14" width="6" height="7" rx="1.500" /><rect x="9.300" y="10" width="6" height="11" rx="1.500" />
        <rect x="18.600" y="5" width="6" height="16" rx="1.500" /><rect x="28" y="0" width="6" height="21" rx="1.500" />
      </svg>
      <svg class="wifi" viewBox="0 0 31 22" aria-hidden="true">
        <path d="M15.500 21.500l-4.200-4.200a6 6 0 0 1 8.400 0z" />
        <path d="M6.500 13a13 13 0 0 1 18 0M1.500 7.500a20.500 20.500 0 0 1 28 0" fill="none" stroke="#000" stroke-width="3.800" />
      </svg>
      <svg class="battery" viewBox="0 0 48 22" aria-hidden="true">
        <rect x="0.900" y="0.900" width="42.200" height="20.200" rx="5" fill="none" stroke="#000" stroke-opacity="0.350" stroke-width="1.800" />
        <rect x="3.500" y="3.500" width="37" height="15" rx="2.800" /><path d="M45 7.500q3 1 3 3.500t-3 3.500z" opacity="0.400" />
      </svg>
    </div>`;
  }

  private search(): TemplateResult {
    return html`<label class="search">
      <svg class="search-icon" viewBox="0 0 41 41" fill="none" stroke="#3ec5b4" stroke-width="2.600" stroke-linejoin="round" aria-hidden="true">
        <path d="M39 1.800L2 19.800l15.500 4 3.800 15.500z" />
      </svg>
      <input class="search-field" type="text" aria-label="Location" .value=${"Current location"} />
    </label>`;
  }

  private moods(selected?: Mood): TemplateResult {
    return html`<div class="moods">
      ${MOODS.map(
        (m) => html`<button class="mood" aria-pressed=${m.mood === selected ? "true" : "false"}>
          <mood-face class="mood-art" .mood=${m.mood} .selected=${m.mood === selected}></mood-face>
          <span>${m.label}</span>
        </button>`
      )}
    </div>`;
  }

  private caption(number: string, name: string, dot = false): TemplateResult {
    return html`<header class="caption">
      <div class="heading">
        <span class="number">${number}</span>
        <span class="rule"><span class="rule-part"></span></span>
        <h1 class="name">${name}</h1>
      </div>
      ${dot ? html`<span class="dot"></span>` : nothing}
    </header>`;
  }

  private reportPhone(): TemplateResult {
    return html`<article class="phone first">
      <city-map class="backing" depth="1200"></city-map>
      <div class="pins">
        ${PINS.map(
          (p) => html`<button class="pin ${p.topic}" style="left:${(p.x / 7.5).toFixed(2)}%;top:${(p.y / 16.24).toFixed(2)}%">
            <topic-icon class="pin-icon" .topic=${p.topic}></topic-icon><span class="pin-text">${p.label}</span>
          </button>`
        )}
      </div>
      ${this.status()}
      <div class="over">
        ${this.search()}
        <div class="tools">
          <button class="tool" aria-label="Layers">
            <svg class="tool-icon" viewBox="0 0 38 38" fill="none" stroke="#333" stroke-width="1.800" stroke-linejoin="round" aria-hidden="true">
              <path d="M19 6L36 13.500 19 21 2 13.500zM2 19.500L19 27.500l17-8M2 25.800L19 34l17-8.200" />
            </svg>
          </button>
          <span class="tool-line"></span>
          <button class="tool" aria-label="Comments">
            <svg class="tool-icon" viewBox="0 0 38 38" aria-hidden="true">
              <defs><linearGradient id="chat" x1="0" y1="1" x2="1" y2="0"><stop offset="0" stop-color="#4ac795" /><stop offset="1" stop-color="#33b7c0" /></linearGradient></defs>
              <path d="M20 4.500c8.300 0 15 6.400 15 14.300s-6.700 14.300-15 14.300c-2.600 0-4.600-.4-6.600-1.500L3.400 34.300l2.500-8.500C5 23.800 5 21.200 5 18.800 5 10.900 11.700 4.500 20 4.500z" fill="url(#chat)" />
              <g fill="#fff"><circle cx="14" cy="18.500" r="1.700" /><circle cx="20" cy="18.500" r="1.700" /><circle cx="26" cy="18.500" r="1.700" /></g>
            </svg>
          </button>
        </div>
        <button class="compass" aria-label="Compass">
          <svg class="tool-icon" viewBox="0 0 38 38" aria-hidden="true">
            <path d="M33.500 5.500L11.500 13 25 27z" fill="#fff" stroke="#333" stroke-width="1.500" stroke-linejoin="round" />
            <path d="M11.500 13L25 27 5 34z" fill="#333" stroke="#333" stroke-linejoin="round" />
          </svg>
        </button>
      </div>
      <section class="sheet topics">
        <h2 class="title">What is going on here?</h2>
        <div class="topic-grid">
          ${TOPICS.map(
            (t) => html`<button class="topic"><topic-icon class="topic-disc" .topic=${t.topic}></topic-icon><span>${t.label}</span></button>`
          )}
        </div>
        <div class="home"></div>
      </section>
    </article>`;
  }

  private sharePhone(): TemplateResult {
    return html`<article class="phone second">
      ${this.status()}
      <div class="bar">
        <button class="back" aria-label="Back">
          <svg class="back-icon" viewBox="0 0 20 37" fill="none" stroke="#333" stroke-width="3.200" stroke-linecap="round" stroke-linejoin="round" aria-hidden="true"><path d="M18 2L2 18.500 18 35" /></svg>
        </button>
        <h2 class="bar-title">Share Details</h2>
      </div>
      <div class="hero"><topic-icon class="hero-icon" topic="photo"></topic-icon><span>Photo spots</span></div>
      <button class="add">
        <svg class="add-icon" viewBox="0 0 40 33" fill="none" stroke="#828282" stroke-width="2.600" stroke-linejoin="round" aria-hidden="true">
          <path d="M4.500 6.500H11L14.500 1.400h11L29 6.500h6.500q3.200 0 3.200 3.200v18.700q0 3.200-3.200 3.200h-31q-3.200 0-3.200-3.200V9.700q0-3.200 3.200-3.200z" /><circle cx="20" cy="18" r="7" />
        </svg>
        Add photos
      </button>
      <label class="field-label" for="details">Share Details</label>
      <input class="field" id="details" type="text" placeholder="Here is a beautiful sculpture" />
      <footer class="foot">
        <div class="actions">
          <button class="cancel">Cancel</button>
          <button class="primary">Submit</button>
        </div>
        <div class="home"></div>
      </footer>
    </article>`;
  }

  private quickPhone(): TemplateResult {
    return html`<article class="phone first">
      <city-map class="backing"></city-map>
      ${this.status()}
      <div class="over">${this.search()}</div>
      <section class="sheet quick">
        <h2 class="title">How was your journey?</h2>
        ${this.moods()}
        <div class="home"></div>
      </section>
    </article>`;
  }

  private fullPhone(): TemplateResult {
    return html`<article class="phone second">
      <city-map class="backing" depth="800"></city-map>
      ${this.status()}
      <div class="over">${this.search()}</div>
      <section class="sheet full">
        <h2 class="title">How was your journey?</h2>
        ${this.moods("bad")}
        <p class="question">What went wrong?</p>
        <div class="chips">
          ${CHIP_ROWS.map(
            (row) => html`<div class="chip-row">
              ${row.map((c) => {
                const classes = { chip: true, picked: c.tone === "picked", vivid: c.tone === "vivid", roomy: c.size === "roomy", wide: c.size === "wide" };
                return html`<button class=${classMap(classes)} aria-pressed=${c.tone ? "true" : "false"}>${c.label}${c.strong ? html`<span class="chip-strong">${c.strong}</span>` : nothing}</button>`;
              })}
            </div>`
          )}
        </div>
        <a class="more" href="#share">More to share</a>
        <button class="primary">Send</button>
        <div class="home"></div>
      </section>
    </article>`;
  }

  render() {
    return html`<main class="page">
      <svg class="backdrop" viewBox="0 0 3027 4096" preserveAspectRatio="xMidYMin slice" aria-hidden="true">
        <defs><linearGradient id="sea" gradientUnits="userSpaceOnUse" x1="1400" y1="0" x2="2000" y2="3300"><stop offset="0" stop-color="#4fc4b8" /><stop offset="1" stop-color="#56c8a9" /></linearGradient></defs>
        <circle cx="3017" cy="18" r="3299" fill="url(#sea)" />
      </svg>
      <section class="stage">${this.caption("04", "Report", true)}${this.reportPhone()}${this.sharePhone()}</section>
      <section class="stage evaluate">${this.caption("05", "Evaluate")}${this.quickPhone()}${this.fullPhone()}</section>
    </main>`;
  }
}
